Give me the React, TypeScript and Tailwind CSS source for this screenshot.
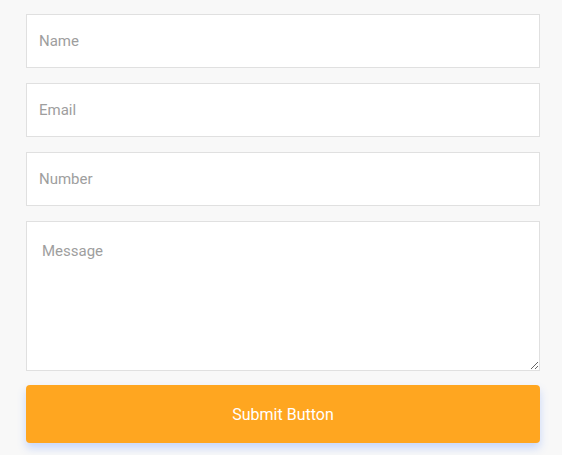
import React from "react";

export default function App() {
  const inputCls =
    "block w-full h-[54px] border border-[#e0e0e0] bg-white px-[12px] text-[15px] text-[#333] placeholder:text-[#9e9e9e] outline-none";
  return (
    <div
      className="min-h-[455px] w-full bg-[#f8f8f8] pl-[26px] pr-[22px] pt-[14px]"
      style={{ fontFamily: "Roboto, 'Liberation Sans', sans-serif" }}
    >
      <form className="flex flex-col" onSubmit={(e) => e.preventDefault()}>
        <input className={inputCls} placeholder="Name" />
        <input className={`${inputCls} mt-[15px]`} placeholder="Email" />
        <input className={`${inputCls} mt-[15px]`} placeholder="Number" />
        <textarea
          className="mt-[15px] block w-full h-[150px] border border-[#e0e0e0] bg-white px-[15px] pt-[20px] pb-[18px] text-[15px] leading-[18px] text-[#333] placeholder:text-[#9e9e9e] outline-none"
          placeholder="Message"
        />
        <button
          type="submit"
          className="mt-[14px] h-[58px] w-full rounded-[4px] bg-[#ffa620] pt-[2px] text-[16px] text-white shadow-[0_5px_8px_rgba(90,140,255,0.3)]"
        >
          Submit Button
        </button>
      </form>
    </div>
  );
}
